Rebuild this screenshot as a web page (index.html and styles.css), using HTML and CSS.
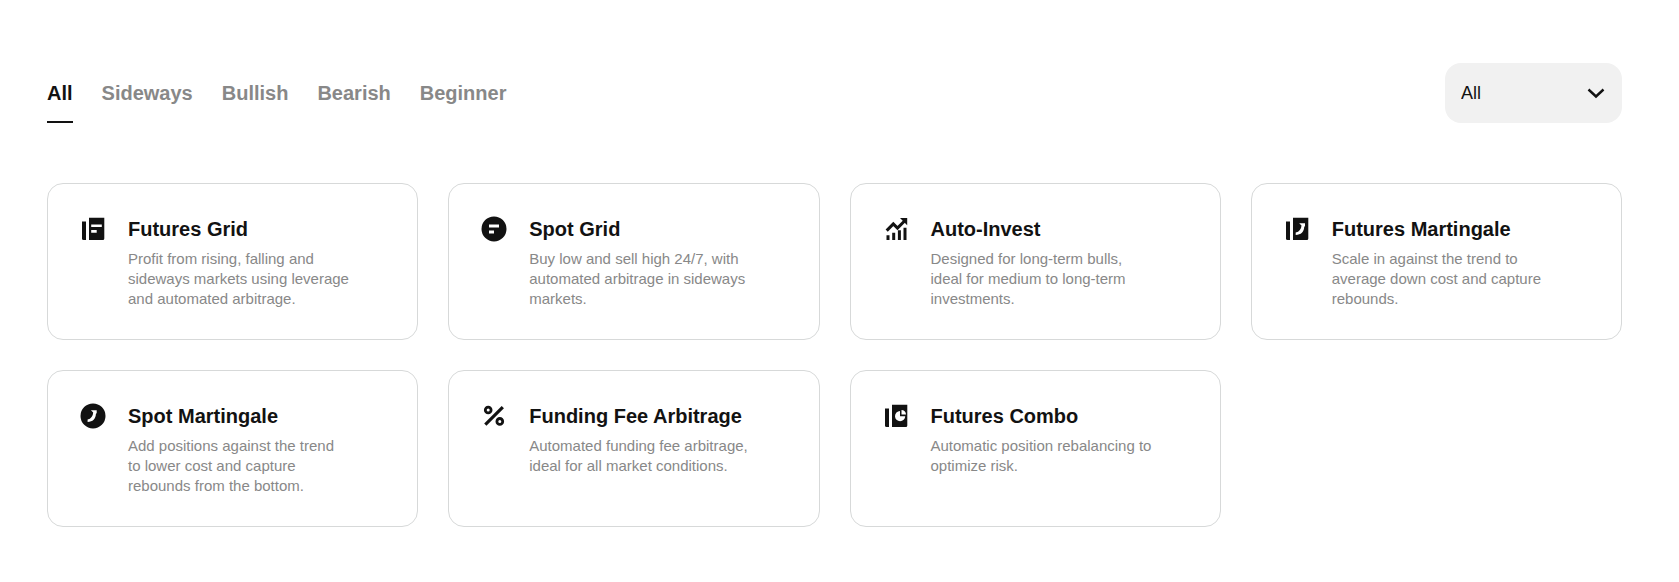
FILE: index.html
```html
<!DOCTYPE html>
<html lang="en">
<head>
<meta charset="utf-8">
<meta name="viewport" content="width=device-width, initial-scale=1">
<title>Trading bots</title>
<link rel="stylesheet" href="styles.css">
</head>
<body>
<main class="page">
  <div class="toolbar">
    <nav class="tabs" aria-label="Market">
      <button class="tab tab-active" type="button" aria-current="true">All</button>
      <button class="tab" type="button">Sideways</button>
      <button class="tab" type="button">Bullish</button>
      <button class="tab" type="button">Bearish</button>
      <button class="tab" type="button">Beginner</button>
    </nav>
    <div class="filter">
      <select class="filter-select" aria-label="Bot type">
        <option>All</option>
      </select>
      <svg class="filter-arrow" viewBox="0 0 20 20" aria-hidden="true"><path d="M2.500 6.500 10 13.500l7.500-7" fill="none" stroke="currentColor" stroke-width="2.400"/></svg>
    </div>
  </div>

  <section class="cards">
    <article class="card">
      <svg class="icon" viewBox="0 0 30 30" aria-hidden="true">
        <path d="M4 7.500h4V26H5.500A1.500 1.500 0 0 1 4 24.500z"/>
        <path fill-rule="evenodd" d="M11 3.700h15.300v20.800a1.500 1.500 0 0 1-1.500 1.500H11zM13.200 10.400v2.700h10.600v-2.700zM13.200 16v2.700h5.500V16z"/>
      </svg>
      <div class="card-body">
        <h2 class="card-title">Futures Grid</h2>
        <p class="card-text">Profit from rising, falling and sideways markets using leverage and automated arbitrage.</p>
      </div>
    </article>
    <article class="card">
      <svg class="icon" viewBox="0 0 30 30" aria-hidden="true">
        <path fill-rule="evenodd" d="M15 2.400a12.500 12.500 0 1 1 0 25 12.500 12.500 0 0 1 0-25zM10 10.500v3h10v-3zM10 16.500v3h5v-3z"/>
      </svg>
      <div class="card-body">
        <h2 class="card-title">Spot Grid</h2>
        <p class="card-text">Buy low and sell high 24/7, with automated arbitrage in sideways markets.</p>
      </div>
    </article>
    <article class="card">
      <svg class="icon" viewBox="0 0 30 30" aria-hidden="true">
        <path d="M5.500 21.300h3V26h-3zM11.200 18.800h3V26h-3zM16.900 16.300h3V26h-3zM22.500 13.700h3V26h-3zM19 4h7.200v7.200z"/>
        <path d="m5.700 16.600 6.600-6.700 4.200 4.200 6.800-6.900" fill="none" stroke="currentColor" stroke-width="3"/>
      </svg>
      <div class="card-body">
        <h2 class="card-title">Auto-Invest</h2>
        <p class="card-text">Designed for long-term bulls, ideal for medium to long-term investments.</p>
      </div>
    </article>
    <article class="card">
      <svg class="icon" viewBox="0 0 30 30" aria-hidden="true">
        <path d="M4 7.500h4V26H5.500A1.500 1.500 0 0 1 4 24.500z"/>
        <path fill-rule="evenodd" d="M11 3.700h15.300v20.800a1.500 1.500 0 0 1-1.500 1.500H11zM17.200 9.200l2.300 2.300c-.2 3.700-2.200 6.300-5.800 7v2.600c5.300 0 8.500-3.600 8.500-8l.8-1.200V9.200z"/>
      </svg>
      <div class="card-body">
        <h2 class="card-title">Futures Martingale</h2>
        <p class="card-text">Scale in against the trend to average down cost and capture rebounds.</p>
      </div>
    </article>
    <article class="card">
      <svg class="icon" viewBox="0 0 30 30" aria-hidden="true">
        <path fill-rule="evenodd" d="M15 2.400a12.500 12.500 0 1 1 0 25 12.500 12.500 0 0 1 0-25zM12.900 9.200l2.300 2.300c-.2 3.700-2.200 6.300-5.600 7v2.600c5.100 0 8.300-3.600 8.300-8l.8-1.200V9.200z"/>
      </svg>
      <div class="card-body">
        <h2 class="card-title">Spot Martingale</h2>
        <p class="card-text">Add positions against the trend to lower cost and capture rebounds from the bottom.</p>
      </div>
    </article>
    <article class="card">
      <svg class="icon" viewBox="0 0 30 30" aria-hidden="true">
        <g fill="none" stroke="currentColor">
          <circle cx="9.200" cy="9" r="2.900" stroke-width="2.800"/>
          <circle cx="20.800" cy="20.400" r="2.900" stroke-width="2.800"/>
          <path d="M6.300 23.600 23.800 6.100" stroke-width="3.200"/>
        </g>
      </svg>
      <div class="card-body">
        <h2 class="card-title">Funding Fee Arbitrage</h2>
        <p class="card-text">Automated funding fee arbitrage, ideal for all market conditions.</p>
      </div>
    </article>
    <article class="card">
      <svg class="icon" viewBox="0 0 30 30" aria-hidden="true">
        <path d="M4 7.500h4V26H5.500A1.500 1.500 0 0 1 4 24.500z"/>
        <path fill-rule="evenodd" d="M11 3.700h15.300v20.800a1.500 1.500 0 0 1-1.500 1.500H11zM19 10v5.200h5.200A5.100 5.100 0 1 1 19 10zM20.500 9v4.500h4.500A4.500 4.500 0 0 0 20.500 9z"/>
      </svg>
      <div class="card-body">
        <h2 class="card-title">Futures Combo</h2>
        <p class="card-text">Automatic position rebalancing to optimize risk.</p>
      </div>
    </article>
  </section>
</main>
</body>
</html>
```

FILE: styles.css
```css
* {
  box-sizing: border-box;
}

body {
  margin: 0;
  background: #fff;
  color: #121212;
  font-family: "Liberation Sans", Arial, sans-serif;
}

.page {
  padding: 63px 57px 55px 47px;
}

.toolbar {
  display: flex;
  justify-content: space-between;
  align-items: center;
  margin-bottom: 60px;
}

.tabs {
  display: flex;
  gap: 29px;
}

.tab {
  padding: 0;
  border: 0;
  border-bottom: 2px solid transparent;
  border-top: 2px solid transparent;
  background: none;
  color: #888;
  font: bold 20px/56px "Liberation Sans", Arial, sans-serif;
  cursor: pointer;
}

.tab-active {
  color: #121212;
  border-bottom-color: #121212;
}

.filter {
  display: grid;
  align-items: center;
  width: 177px;
}

.filter-select {
  grid-area: 1 / 1;
  appearance: none;
  width: 100%;
  height: 60px;
  padding: 0 16px;
  border: 0;
  border-radius: 16px;
  background: #f1f1f1;
  color: #121212;
  font: 18px/24px "Liberation Sans", Arial, sans-serif;
}

.filter-arrow {
  grid-area: 1 / 1;
  justify-self: end;
  width: 20px;
  height: 20px;
  margin-right: 16px;
  pointer-events: none;
}

.cards {
  display: grid;
  grid-template-columns: repeat(auto-fill, minmax(320px, 1fr));
  gap: 30px;
}

.card {
  display: flex;
  gap: 20px;
  padding: 30px;
  border: 1px solid #d7d9d9;
  border-radius: 16px;
}

.icon {
  flex: none;
  width: 30px;
  height: 30px;
  fill: currentColor;
}

.card-title {
  margin: 0 0 5px;
  font-size: 20px;
  line-height: 30px;
}

.card-text {
  max-width: 222px;
  margin: 0;
  color: #888;
  font-size: 15px;
  line-height: 20px;
}
```
